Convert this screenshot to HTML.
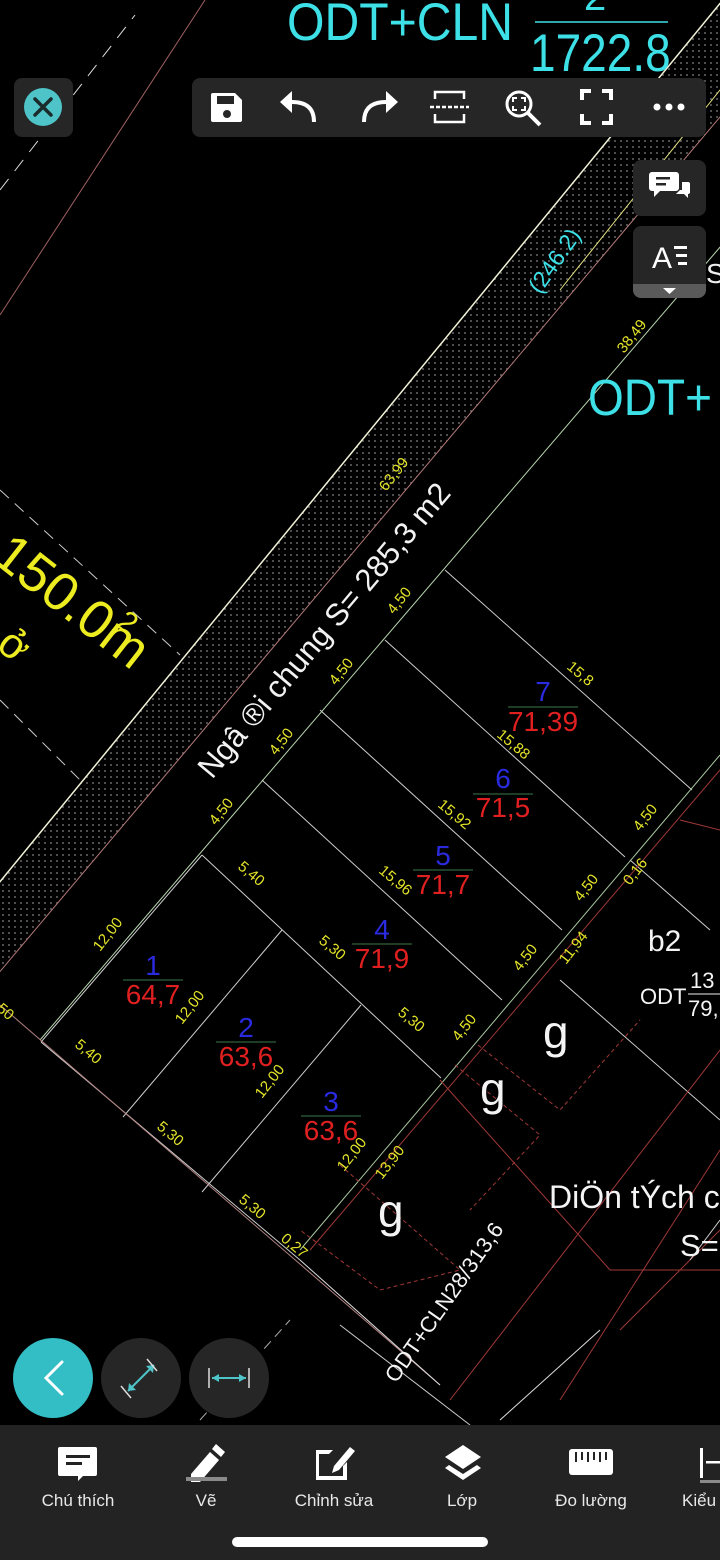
<!DOCTYPE html>
<html><head><meta charset="utf-8">
<style>
html,body{margin:0;padding:0;background:#000;}
body{width:720px;height:1560px;position:relative;overflow:hidden;font-family:"Liberation Sans",sans-serif;}
svg{position:absolute;left:0;top:0;}
.lbl{position:absolute;color:#e8e8e8;font-size:17px;transform:translateX(-50%);white-space:nowrap;top:1491px;}
</style></head><body>
<svg width="720" height="1560" viewBox="0 0 720 1560" xmlns="http://www.w3.org/2000/svg">
<defs>
<pattern id="dots" width="6" height="6" patternUnits="userSpaceOnUse"><circle cx="3" cy="3" r="1" fill="#666"/></pattern>
</defs>
<polygon points="731,-10 827,-10 -24,1000 -97,1000" fill="url(#dots)"/>
<line x1="731" y1="-10" x2="-97" y2="1000" stroke="#f2f2d8" stroke-width="1.5"/>
<line x1="827" y1="-10" x2="-24" y2="1000" stroke="#b57a7a" stroke-width="1"/>
<line x1="932" y1="0" x2="40" y2="1040" stroke="#b8d8b0" stroke-width="1"/>
<line x1="760" y1="40" x2="560" y2="290" stroke="#e6e680" stroke-width="1"/>
<line x1="0" y1="315" x2="205" y2="0" stroke="#a06060" stroke-width="1"/>
<line x1="0" y1="190" x2="135" y2="15" stroke="#ddd" stroke-width="1" stroke-dasharray="14,10"/>
<line x1="0" y1="490" x2="180" y2="655" stroke="#ccc" stroke-width="1" stroke-dasharray="12,8"/>
<line x1="0" y1="700" x2="85" y2="785" stroke="#ccc" stroke-width="1" stroke-dasharray="12,8"/>
<g stroke="#cfcfcf" stroke-width="1">
<line x1="445" y1="570" x2="692" y2="790"/>
<line x1="385" y1="640" x2="625" y2="857"/>
<line x1="320" y1="710" x2="562" y2="930"/>
<line x1="262" y1="780" x2="502" y2="1000"/>
<line x1="202" y1="855" x2="441" y2="1078"/>
<line x1="202" y1="855" x2="41" y2="1042"/>
<line x1="282" y1="930" x2="123" y2="1117"/>
<line x1="361" y1="1005" x2="202" y2="1192"/>
<line x1="41" y1="1042" x2="300" y2="1260"/>
<line x1="630" y1="860" x2="710" y2="930"/>
<line x1="560" y1="980" x2="720" y2="1120"/>
</g>
<line x1="720" y1="755" x2="300" y2="1250" stroke="#a8c8a0" stroke-width="1"/>
<line x1="0" y1="1005" x2="440" y2="1385" stroke="#b08080" stroke-width="1"/>
<line x1="300" y1="1260" x2="440" y2="1385" stroke="#ddd" stroke-width="1"/>
<g stroke="#a03838" stroke-width="1" fill="none">
<line x1="720" y1="770" x2="310" y2="1250"/>
<polyline points="440,1080 610,1270 720,1270"/>
<line x1="720" y1="1050" x2="450" y2="1400"/>
<line x1="720" y1="1150" x2="560" y2="1400"/>
<line x1="620" y1="1330" x2="720" y2="1230"/>
<polyline points="478,1045 560,1110 640,1020" stroke-dasharray="4,3"/>
<polyline points="455,1065 540,1135 470,1210" stroke-dasharray="4,3"/>
<polyline points="340,1165 460,1270 380,1290 300,1230" stroke-dasharray="4,3"/>
<line x1="720" y1="830" x2="680" y2="820"/>
</g>
<line x1="690" y1="1260" x2="720" y2="1220" stroke="#ccc"/>
<line x1="500" y1="1420" x2="600" y2="1330" stroke="#ddd"/>
<line x1="340" y1="1325" x2="470" y2="1425" stroke="#ccc"/>
<line x1="200" y1="1420" x2="290" y2="1320" stroke="#aaa" stroke-dasharray="10,6"/>

<text transform="translate(287,40) scale(1,1.15)" fill="#3de0e6" font-size="46" textLength="226" lengthAdjust="spacingAndGlyphs">ODT+CLN</text>
<line x1="535" y1="22" x2="668" y2="22" stroke="#3de0e6" stroke-width="1.5"/>
<text x="584" y="10" fill="#3de0e6" font-size="40">2</text>
<text transform="translate(530,71) scale(1,1.15)" fill="#3de0e6" font-size="46">1722.8</text>
<text transform="translate(588,415) scale(1,1.1)" fill="#3de0e6" font-size="46">ODT+</text>
<text x="706" y="283" fill="#eee" font-size="28">S</text>
<text transform="translate(540,295) rotate(-55)" fill="#3de0e6" font-size="23">(246.2)</text>

<text transform="translate(-10,560) rotate(38)" fill="#ecec20" font-size="54">150.0m</text>
<text transform="translate(115,625) rotate(38)" fill="#ecec20" font-size="30">2</text>
<text transform="translate(-5,648) rotate(38)" fill="#ecec20" font-size="42">ở</text>

<text transform="translate(212,780) rotate(-50)" fill="#f2f2f2" font-size="31">Ngâ ®i chung S= 285,3 m2</text>

<g fill="#e4e42a" font-size="15">
<text transform="translate(386,492) rotate(-52)">63,99</text>
<text transform="translate(394,615) rotate(-52)">4,50</text>
<text transform="translate(336,686) rotate(-52)">4,50</text>
<text transform="translate(276,756) rotate(-52)">4,50</text>
<text transform="translate(216,826) rotate(-52)">4,50</text>
<text transform="translate(624,354) rotate(-52)">38,49</text>
<text transform="translate(566,668) rotate(40)">15,8</text>
<text transform="translate(496,736) rotate(40)">15,88</text>
<text transform="translate(437,806) rotate(40)">15,92</text>
<text transform="translate(378,872) rotate(40)">15,96</text>
<text transform="translate(237,868) rotate(40)">5,40</text>
<text transform="translate(318,942) rotate(40)">5,30</text>
<text transform="translate(397,1014) rotate(40)">5,30</text>
<text transform="translate(100,952) rotate(-52)">12,00</text>
<text transform="translate(182,1025) rotate(-52)">12,00</text>
<text transform="translate(262,1099) rotate(-52)">12,00</text>
<text transform="translate(344,1172) rotate(-52)">12,00</text>
<text transform="translate(640,832) rotate(-52)">4,50</text>
<text transform="translate(581,902) rotate(-52)">4,50</text>
<text transform="translate(520,972) rotate(-52)">4,50</text>
<text transform="translate(459,1042) rotate(-52)">4,50</text>
<text transform="translate(630,886) rotate(-52)">0,16</text>
<text transform="translate(566,965) rotate(-52)">11,94</text>
<text transform="translate(382,1180) rotate(-52)">13,90</text>
<text transform="translate(74,1046) rotate(40)">5,40</text>
<text transform="translate(156,1128) rotate(40)">5,30</text>
<text transform="translate(238,1201) rotate(40)">5,30</text>
<text transform="translate(280,1240) rotate(40)">0,27</text>
<text transform="translate(-4,1010) rotate(40)">50</text>
</g>

<g font-size="28" text-anchor="middle">
<text x="543" y="701" fill="#2a2ae0">7</text><line x1="508" y1="707" x2="578" y2="707" stroke="#3a7a4a"/><text x="543" y="731" fill="#e02020">71,39</text>
<text x="503" y="788" fill="#2a2ae0">6</text><line x1="473" y1="794" x2="533" y2="794" stroke="#3a7a4a"/><text x="503" y="817" fill="#e02020">71,5</text>
<text x="443" y="865" fill="#2a2ae0">5</text><line x1="413" y1="870" x2="473" y2="870" stroke="#3a7a4a"/><text x="443" y="894" fill="#e02020">71,7</text>
<text x="382" y="939" fill="#2a2ae0">4</text><line x1="352" y1="944" x2="412" y2="944" stroke="#3a7a4a"/><text x="382" y="968" fill="#e02020">71,9</text>
<text x="153" y="975" fill="#2a2ae0">1</text><line x1="123" y1="980" x2="183" y2="980" stroke="#3a7a4a"/><text x="153" y="1004" fill="#e02020">64,7</text>
<text x="246" y="1037" fill="#2a2ae0">2</text><line x1="216" y1="1042" x2="276" y2="1042" stroke="#3a7a4a"/><text x="246" y="1066" fill="#e02020">63,6</text>
<text x="331" y="1111" fill="#2a2ae0">3</text><line x1="301" y1="1116" x2="361" y2="1116" stroke="#3a7a4a"/><text x="331" y="1140" fill="#e02020">63,6</text>
</g>

<g fill="#f4f4f4">
<text x="648" y="951" font-size="30">b2</text>
<text x="640" y="1004" font-size="22">ODT</text>
<text x="690" y="988" font-size="22">13</text>
<line x1="688" y1="994" x2="720" y2="994" stroke="#eee"/>
<text x="688" y="1016" font-size="22">79,</text>
<text x="543" y="1048" font-size="46">g</text>
<text x="480" y="1105" font-size="46">g</text>
<text x="378" y="1227" font-size="46">g</text>
<text x="549" y="1208" font-size="32">DiÖn tÝch c</text>
<text x="680" y="1256" font-size="31">S=</text>
<text transform="translate(396,1384) rotate(-55)" font-size="22">ODT+CLN28/313,6</text>
</g>

<rect x="14" y="78" width="59" height="59" rx="8" fill="#262626"/>
<circle cx="43" cy="107" r="19" fill="#4ec3c8"/>
<path d="M35 99 L51 115 M51 99 L35 115" stroke="#1b2b2c" stroke-width="3.5" stroke-linecap="round"/>

<rect x="192" y="78" width="514" height="59" rx="8" fill="#262626"/>
<g fill="#fff" stroke="#fff">
<path d="M213 93 h22 l7 7 v20 a2 2 0 0 1 -2 2 h-27 a2 2 0 0 1 -2 -2 v-25 a2 2 0 0 1 2 -2z" stroke="none"/>
<rect x="217" y="96" width="17" height="8" fill="#262626" stroke="none"/>
<circle cx="227" cy="114" r="4" fill="#262626" stroke="none"/>
<path d="M314 122 c0 -14 -8 -20 -22 -20" fill="none" stroke-width="4"/>
<path d="M280 102 l12 -11 v22z" stroke="none"/>
<path d="M364 122 c0 -14 8 -20 22 -20" fill="none" stroke-width="4"/>
<path d="M398 102 l-12 -11 v22z" stroke="none"/>
<path d="M435 99 v-7 h29 v7 M435 114 v8 h29 v-8" fill="none" stroke-width="2.5"/>
<path d="M430 107 h39" stroke-width="2.5" stroke-dasharray="4,2" fill="none"/>
<circle cx="519" cy="104" r="12" fill="none" stroke-width="3"/>
<path d="M528 113 l12 12" stroke-width="4" fill="none"/>
<path d="M513 102 v-4 h4 M521 98 h4 v4 M525 106 v4 h-4 M517 110 h-4 v-4" fill="none" stroke-width="2"/>
<path d="M582 100 v-9 h9 M602 91 h9 v9 M611 114 v9 h-9 M591 123 h-9 v-9" fill="none" stroke-width="4"/>
<circle cx="657" cy="107" r="3.5" stroke="none"/><circle cx="669" cy="107" r="3.5" stroke="none"/><circle cx="681" cy="107" r="3.5" stroke="none"/>
</g>

<rect x="633" y="160" width="73" height="56" rx="8" fill="#262626"/>
<g fill="#fff">
<path d="M652 172 h24 a3 3 0 0 1 3 3 v13 a3 3 0 0 1 -3 3 h-16 l-6 6 v-6 h-2 a3 3 0 0 1 -3 -3 v-13 a3 3 0 0 1 3 -3z"/>
<path d="M682 182 h6 a2 2 0 0 1 2 2 v8 a2 2 0 0 1 -2 2 v4 l-4 -4 h-8 l4 -4 h2z"/>
</g>
<rect x="656" y="177" width="14" height="2.5" fill="#262626"/><rect x="656" y="183" width="10" height="2.5" fill="#262626"/>
<rect x="633" y="226" width="73" height="72" rx="8" fill="#262626"/>
<path d="M633 284 h73 v6 a8 8 0 0 1 -8 8 h-57 a8 8 0 0 1 -8 -8z" fill="#5a5a5a"/>
<path d="M663 288 h13 l-6.5 6z" fill="#fff"/>
<text x="652" y="268" fill="#fff" font-size="30" font-family="Liberation Sans">A</text>
<g fill="#fff"><rect x="674" y="246" width="13" height="3"/><rect x="676" y="254" width="11" height="3"/><rect x="678" y="262" width="9" height="3"/></g>

<circle cx="53" cy="1378" r="40" fill="#33bdc4"/>
<path d="M62 1362 L46 1378 L62 1394" stroke="#fff" stroke-width="3" fill="none" stroke-linecap="round"/>
<circle cx="141" cy="1378" r="40" fill="#262626"/>
<path d="M128 1391 L154 1365" stroke="#4ec3c8" stroke-width="2"/>
<path d="M154 1365 l-8 1 l7 7z M128 1391 l8 -1 l-7 -7z" fill="#4ec3c8"/>
<path d="M121 1386 l10 12 M147 1359 l10 12" stroke="#ddd" stroke-width="1.5"/>
<circle cx="229" cy="1378" r="40" fill="#262626"/>
<path d="M212 1378 h34" stroke="#4ec3c8" stroke-width="2"/>
<path d="M212 1378 l7 -4 v8z M246 1378 l-7 -4 v8z" fill="#4ec3c8"/>
<path d="M209 1368 v20 M249 1368 v20" stroke="#ddd" stroke-width="1.5"/>

<rect x="0" y="1425" width="720" height="135" fill="#232323"/>
<g fill="#fff">
<path d="M60 1447 h35 a2 2 0 0 1 2 2 v25 a2 2 0 0 1 -2 2 h-12 l-5 5 v-5 h-18 a2 2 0 0 1 -2 -2 v-25 a2 2 0 0 1 2 -2z"/>
<path d="M191 1474 l19 -22 l9 8 l-19 22 h-9z"/>
<path d="M212 1449 l4 -5 l9 8 l-4 5z"/>
<path d="M316 1450 h17 l-4 4 h-10 v22 h24 v-10 l4 -4 v18 h-31z"/>
<path d="M334 1466 l16 -19 l5 4 l-16 19 l-7 3z"/>
<path d="M463 1445 l18 12 l-18 12 l-18 -12z"/>
<path d="M449 1465 l14 9 l14 -9 l4 3 l-18 12 l-18 -12z"/>
<rect x="569" y="1449" width="44" height="26" rx="3"/>
<rect x="700" y="1448" width="3" height="30"/>
<rect x="706" y="1461" width="14" height="2.5"/>
</g>
<rect x="66" y="1455" width="24" height="3" fill="#232323"/><rect x="66" y="1462" width="16" height="3" fill="#232323"/>
<g fill="#232323"><rect x="575" y="1452" width="2" height="10"/><rect x="581" y="1452" width="2" height="8"/><rect x="587" y="1452" width="2" height="10"/><rect x="593" y="1452" width="2" height="8"/><rect x="599" y="1452" width="2" height="10"/><rect x="605" y="1452" width="2" height="8"/></g>
<rect x="186" y="1477" width="41" height="4" fill="#8a8a8a"/>
<rect x="700" y="1480" width="20" height="3" fill="#8a8a8a"/>
<rect x="232" y="1537" width="256" height="10" rx="5" fill="#fff"/>
</svg>
<div class="lbl" style="left:78px">Chú thích</div>
<div class="lbl" style="left:206px">Vẽ</div>
<div class="lbl" style="left:334px">Chỉnh sửa</div>
<div class="lbl" style="left:462px">Lớp</div>
<div class="lbl" style="left:591px">Đo lường</div>
<div class="lbl" style="left:682px;transform:none;">Kiểu</div>
</body></html>
